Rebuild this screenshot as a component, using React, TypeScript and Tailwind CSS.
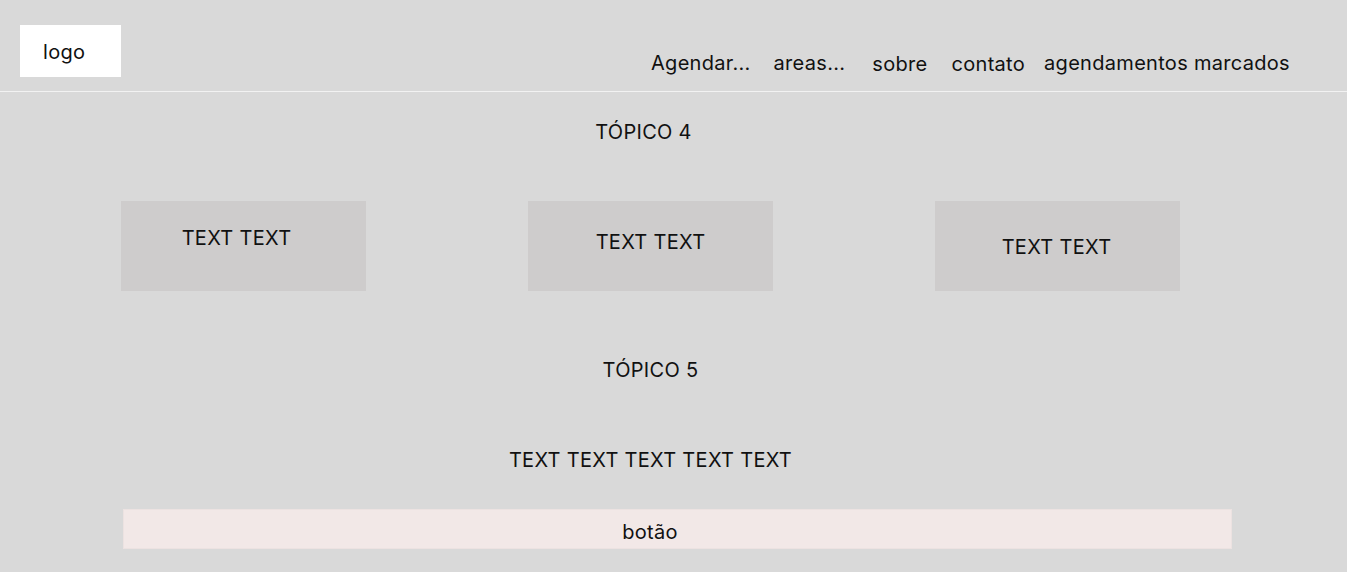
import React from 'react';

const NAV = [
  { label: 'Agendar...', cls: 'ml-0' },
  { label: 'areas...', cls: 'ml-[23px]' },
  { label: 'sobre', cls: 'ml-[27px] translate-y-px' },
  { label: 'contato', cls: 'ml-[24px] translate-y-px' },
  { label: 'agendamentos marcados', cls: 'ml-[19px]' },
];

const CARDS = [
  { label: 'TEXT TEXT', cls: 'pt-[25px] pr-[14px]' },
  { label: 'TEXT TEXT', cls: 'pt-[29px]' },
  { label: 'TEXT TEXT', cls: 'pt-[34px] pr-[2px]' },
];

export default function App() {
  return (
    <div
      className="min-h-[572px] w-full bg-[#d9d9d9] text-[#111] overflow-hidden tracking-[0.3px]"
      style={{ fontFamily: 'Inter, "Noto Sans", sans-serif' }}
    >
      {/* cabeçalho */}
      <header className="h-[92px] border-b border-[#f2f2f2] flex items-start">
        <div className="ml-5 mt-[25px] w-[101px] h-[52px] bg-white flex items-center pl-[23px] pt-[2px] text-[20px] leading-6">
          logo
        </div>
        <nav className="ml-[530px] mt-[51px] flex items-center text-[20px] leading-6">
          {NAV.map((n) => (
            <span key={n.label} className={`whitespace-nowrap ${n.cls}`}>
              {n.label}
            </span>
          ))}
        </nav>
      </header>

      {/* conteúdo */}
      <main className="ml-[121px] w-[1059px] flex flex-col items-center">
        <h2 className="mt-[28px] text-[20px] leading-6 pr-[14px]">TÓPICO 4</h2>

        <div className="mt-[57px] w-full flex justify-between">
          {CARDS.map((c, i) => (
            <div
              key={i}
              className={`w-[245px] h-[90px] bg-[#cecccc] flex justify-center text-[20px] leading-6 ${c.cls}`}
            >
              {c.label}
            </div>
          ))}
        </div>

        <h2 className="mt-[67px] text-[20px] leading-6">TÓPICO 5</h2>

        <p className="mt-[66px] text-[20px] leading-6">TEXT TEXT TEXT TEXT TEXT</p>
      </main>

      <button className="ml-[123px] mt-[37px] w-[1109px] h-10 bg-[#f2e8e7] border border-[#ece2e1] flex items-center justify-center text-[20px] leading-6 pr-[55px] pt-[5px] tracking-[0.3px]">
        botão
      </button>
    </div>
  );
}
